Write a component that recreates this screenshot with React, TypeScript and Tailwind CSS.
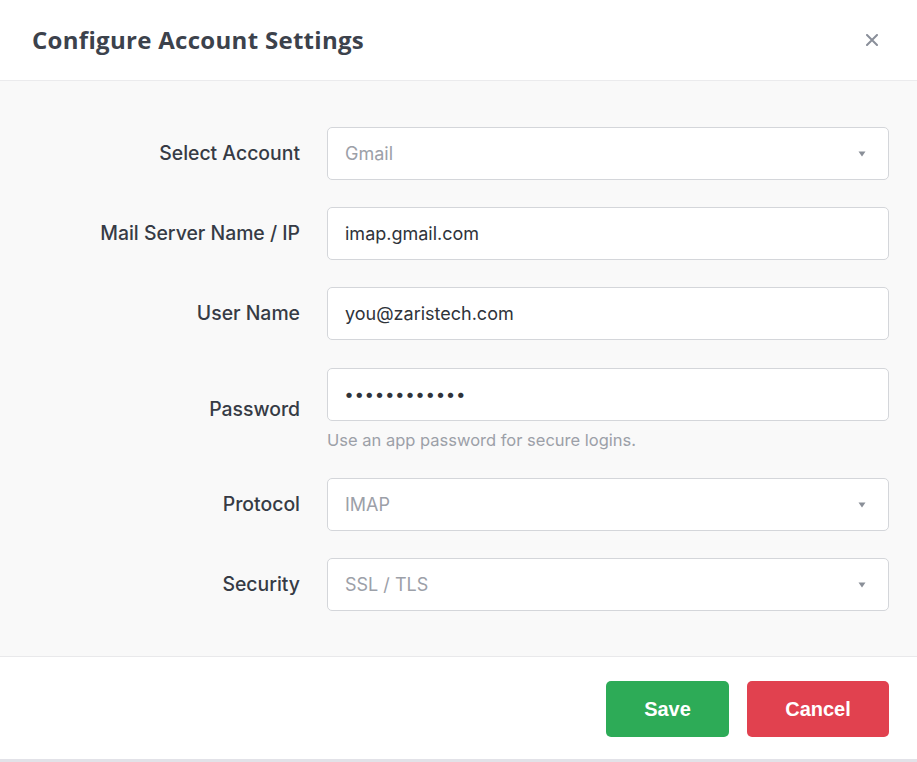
import React from "react";

const Caret = () => (
  <svg width="8" height="6" viewBox="0 0 8 6" className="shrink-0">
    <path d="M0.5 0.5 L7.5 0.5 L4 5.5 Z" fill="#8a8f98" />
  </svg>
);

function Row({ label, children, extra }: { label: string; children: React.ReactNode; extra?: string }) {
  return (
    <div className={`grid grid-cols-[300px_1fr] gap-[27px] items-center ${extra ?? ""}`}>
      <div className="text-right text-[19.4px] font-medium text-[#363b45]">{label}</div>
      <div>{children}</div>
    </div>
  );
}

function Input({ value }: { value: string }) {
  return (
    <div className="h-[53px] rounded-[5px] border border-[#d4d6da] bg-white px-[17px] flex items-center text-[18px] text-[#2f333a]">
      {value}
    </div>
  );
}

function Select({ value }: { value: string }) {
  return (
    <div className="h-[53px] rounded-[5px] border border-[#d4d6da] bg-white pl-[17px] pr-[22px] flex items-center justify-between text-[18px] text-[#9ca0a8]">
      <span>{value}</span>
      <Caret />
    </div>
  );
}

export default function App() {
  return (
    <div
      className="w-full h-[762px] bg-white flex flex-col"
      style={{ fontFamily: "Inter, 'Noto Sans', sans-serif" }}
    >
      <div className="h-[81px] shrink-0 px-[32px] flex items-center justify-between border-b border-[#ebebed]">
        <h1
          className="text-[24px] font-bold text-[#3c424c] tracking-[0.3px]"
          style={{ fontFamily: "'Open Sans', sans-serif" }}
        >
          Configure Account Settings
        </h1>
        <svg width="12" height="12" viewBox="0 0 12 12" className="mr-[7px]">
          <path d="M1 1 L11 11 M11 1 L1 11" stroke="#8a8f9a" strokeWidth="2" strokeLinecap="round" />
        </svg>
      </div>

      <div className="bg-[#f9f9f9] pt-[46px] pb-[45px] pr-[28px] flex flex-col gap-[27px] border-b border-[#e9e9eb]">
        <Row label="Select Account">
          <Select value="Gmail" />
        </Row>
        <Row label="Mail Server Name / IP">
          <Input value="imap.gmail.com" />
        </Row>
        <Row label="User Name">
          <Input value="you@zaristech.com" />
        </Row>
        <Row label="Password" extra="mt-[1px]">
          <div className="flex flex-col">
            <div className="h-[53px] rounded-[5px] border border-[#d4d6da] bg-white px-[17px] flex items-center text-[#2f333a]">
              <span className="text-[17px] tracking-[2.1px] font-bold">••••••••••••</span>
            </div>
            <div className="mt-[9px] h-[21px] text-[16.5px] text-[#9ca0a8] leading-[21px]">
              Use an app password for secure logins.
            </div>
          </div>
        </Row>
        <Row label="Protocol">
          <Select value="IMAP" />
        </Row>
        <Row label="Security">
          <Select value="SSL / TLS" />
        </Row>
      </div>

      <div className="flex-1 flex items-center justify-end gap-[18px] pr-[28px] pt-[2px]">
        <button
          className="w-[123px] h-[56px] rounded-[5px] bg-[#2dab57] text-white text-[20px] font-bold"
          style={{ fontFamily: "'Liberation Sans', Arial, sans-serif" }}
        >
          Save
        </button>
        <button
          className="w-[142px] h-[56px] rounded-[5px] bg-[#e1414f] text-white text-[20px] font-bold"
          style={{ fontFamily: "'Liberation Sans', Arial, sans-serif" }}
        >
          Cancel
        </button>
      </div>
      <div className="h-[3px] shrink-0 bg-[#e2e2e8]" />
    </div>
  );
}
